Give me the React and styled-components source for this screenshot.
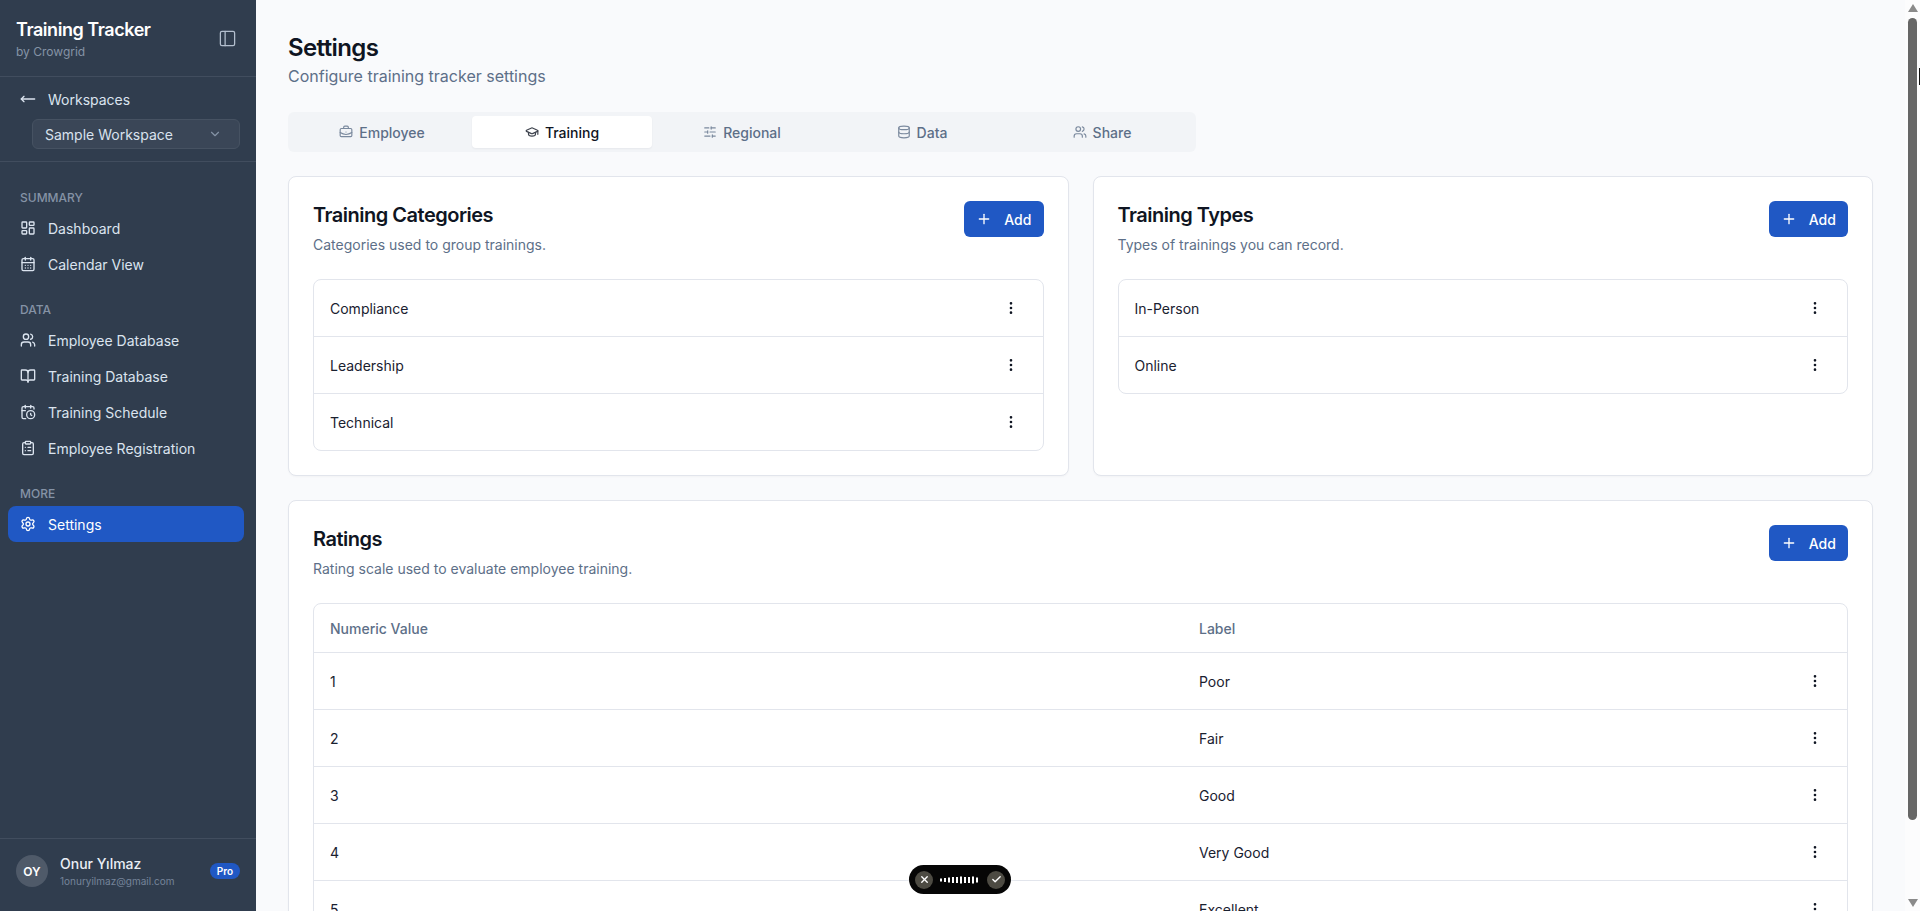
import styled, { createGlobalStyle } from "styled-components";
import {
  BookOpen,
  BriefcaseBusiness,
  CalendarClock,
  CalendarDays,
  Check,
  ChevronDown,
  ClipboardList,
  Database,
  EllipsisVertical,
  GraduationCap,
  LayoutDashboard,
  MoveLeft,
  PanelLeft,
  Plus,
  Settings,
  SlidersHorizontal,
  Users,
  X,
} from "lucide-react";

const GlobalStyle = createGlobalStyle`
  * {
    box-sizing: border-box;
  }

  html,
  body {
    margin: 0;
    height: 100%;
    overflow: hidden;
    font-family: Inter, "Liberation Sans", sans-serif;
    background: #f9fafc;
  }
`;

const Shell = styled.div`
  display: flex;
  height: 911px;
  overflow: hidden;
  position: relative;
`;

const Sidebar = styled.aside`
  width: 256px;
  flex: none;
  display: flex;
  flex-direction: column;
  background: #303d4e;
  color: #e2e8f0;
`;

const Brand = styled.div`
  height: 77px;
  flex: none;
  display: flex;
  align-items: center;
  justify-content: space-between;
  padding: 0 19px 0 16px;
  border-bottom: 1px solid #414d5e;
  color: #b3bfce;
`;

const BrandName = styled.div`
  font-size: 18px;
  line-height: 28px;
  font-weight: 600;
  letter-spacing: -0.45px;
  color: #fff;
`;

const BrandSub = styled.div`
  font-size: 12px;
  line-height: 16px;
  color: #8593a6;
`;

const WorkspaceBlock = styled.div`
  height: 85px;
  flex: none;
  padding: 8px 16px 0 20px;
  border-bottom: 1px solid #414d5e;
`;

const BackRow = styled.div`
  height: 28px;
  display: flex;
  align-items: center;
  gap: 12px;
  font-size: 14px;
  color: #dbe4ef;
`;

const WorkspaceSelect = styled.div`
  height: 30px;
  margin: 6px 0 0 12px;
  display: flex;
  align-items: center;
  justify-content: space-between;
  padding: 0 17px 0 12px;
  font-size: 14px;
  color: #d9e2ee;
  background: #3a4657;
  border: 1px solid #465262;
  border-radius: 6px;

  svg {
    color: #8593a6;
  }
`;

const Nav = styled.nav`
  flex: 1;
  padding: 25px 12px 0 8px;
`;

const NavLabel = styled.div`
  height: 20px;
  margin: 0 0 3px 12px;
  display: flex;
  align-items: center;
  font-size: 12px;
  font-weight: 500;
  color: #8593a6;
`;

const NavGroup = styled.div`
  margin-bottom: 17px;
`;

const NavItem = styled.div`
  height: 36px;
  display: flex;
  align-items: center;
  gap: 12px;
  padding-left: 12px;
  border-radius: 8px;
  font-size: 14px;
  color: ${(props) => (props.$active ? "#fff" : "#dbe4ef")};
  background: ${(props) => (props.$active ? "#2058c4" : "transparent")};
`;

const Footer = styled.div`
  height: 73px;
  flex: none;
  display: flex;
  align-items: center;
  gap: 12px;
  padding: 16px 16px 24px;
  border-top: 1px solid #414d5e;
`;

const Avatar = styled.div`
  width: 32px;
  height: 32px;
  flex: none;
  display: flex;
  align-items: center;
  justify-content: center;
  border-radius: 50%;
  background: #4f5a69;
  color: #fff;
  font-size: 12px;
  font-weight: 600;
`;

const UserInfo = styled.div`
  flex: 1;
  min-width: 0;
`;

const UserName = styled.div`
  font-size: 14px;
  line-height: 20px;
  font-weight: 500;
  color: #e9eef5;
`;

const UserMail = styled.div`
  font-size: 10px;
  line-height: 14px;
  color: #75849a;
`;

const ProBadge = styled.span`
  height: 16px;
  padding: 0 7px;
  display: flex;
  align-items: center;
  border-radius: 999px;
  background: #2058c4;
  color: #fff;
  font-size: 10px;
  font-weight: 600;
`;

const Main = styled.main`
  flex: 1;
  min-width: 0;
  padding: 32px 32px 0;
  overflow: hidden;
`;

const PageTitle = styled.h1`
  margin: 0;
  font-size: 24px;
  line-height: 32px;
  font-weight: 600;
  letter-spacing: -0.6px;
  color: #0f1522;
`;

const PageSub = styled.p`
  margin: 0;
  font-size: 16px;
  line-height: 24px;
  color: #5d6f88;
`;

const TabBar = styled.div`
  width: 908px;
  height: 40px;
  margin: 24px 0;
  padding: 4px;
  display: grid;
  grid-template-columns: repeat(5, 1fr);
  background: #f2f4f7;
  border-radius: 6px;
`;

const Tab = styled.div`
  display: flex;
  align-items: center;
  justify-content: center;
  gap: 6px;
  border-radius: 4px;
  font-size: 14px;
  font-weight: 500;
  color: ${(props) => (props.$active ? "#0f1522" : "#5d6f88")};
  background: ${(props) => (props.$active ? "#fff" : "transparent")};
  box-shadow: ${(props) =>
    props.$active ? "0 1px 2px rgba(15, 21, 34, 0.05)" : "none"};

  svg {
    opacity: 0.8;
  }
`;

const CardRow = styled.div`
  display: grid;
  grid-template-columns: 1fr 1fr;
  gap: 24px;
  margin-bottom: 24px;
`;

const Card = styled.section`
  padding: 24px;
  background: #fff;
  border: 1px solid #e2e5ec;
  border-radius: 8px;
  box-shadow: 0 1px 2px rgba(15, 21, 34, 0.03);
`;

const CardHead = styled.div`
  display: flex;
  justify-content: space-between;
  align-items: flex-start;
  margin-bottom: 24px;
`;

const CardTitle = styled.h2`
  margin: 0 0 6px;
  font-size: 20px;
  line-height: 28px;
  font-weight: 600;
  letter-spacing: -0.5px;
  color: #0f1522;
`;

const CardDesc = styled.p`
  margin: 0;
  font-size: 14px;
  line-height: 20px;
  color: #5d6f88;
`;

const AddButton = styled.button`
  width: 79.5px;
  height: 36px;
  display: flex;
  align-items: center;
  justify-content: center;
  gap: 12px;
  border: 0;
  border-radius: 6px;
  background: #2058c4;
  color: #fff;
  font: 500 14px Inter, sans-serif;
`;

const List = styled.div`
  border: 1px solid #e2e5ec;
  border-radius: 8px;
  overflow: hidden;
`;

const ListRow = styled.div`
  height: 56px;
  display: flex;
  align-items: center;
  justify-content: space-between;
  padding: 0 16px;
  font-size: 14px;
  color: #1a2130;

  & + & {
    height: 57px;
    border-top: 1px solid #e2e5ec;
  }
`;

const MenuDots = styled.span`
  width: 32px;
  height: 32px;
  display: flex;
  align-items: center;
  justify-content: center;
  color: #0f1522;
`;

const TableHead = styled.div`
  height: 48px;
  display: grid;
  grid-template-columns: 869px 1fr;
  align-items: center;
  padding: 0 16px;
  font-size: 14px;
  font-weight: 500;
  color: #5d6f88;
`;

const TableRow = styled.div`
  height: 57px;
  display: grid;
  grid-template-columns: 869px 1fr 32px;
  align-items: center;
  padding: 0 16px;
  border-top: 1px solid #e2e5ec;
  font-size: 14px;
  color: #1a2130;
`;

const Scrollbar = styled.div`
  width: 15px;
  flex: none;
  display: flex;
  flex-direction: column;
  align-items: center;
  padding: 4px 0;
  background: #fcfcfd;
`;

const ArrowUp = styled.div`
  flex: none;
  border-left: 5px solid transparent;
  border-right: 5px solid transparent;
  border-bottom: 8px solid #8a8a8a;
`;

const ArrowDown = styled(ArrowUp)`
  margin-top: auto;
  border-bottom: 0;
  border-top: 8px solid #8a8a8a;
`;

const Thumb = styled.div`
  width: 9px;
  height: 802px;
  margin-top: 6px;
  border-radius: 5px;
  background: #666;
`;

const CursorMark = styled.div`
  position: absolute;
  right: 0;
  top: 68px;
  width: 1px;
  height: 17px;
  background: #111;
`;

const VoicePill = styled.div`
  position: absolute;
  left: 909px;
  top: 865px;
  width: 102px;
  height: 29px;
  display: flex;
  align-items: center;
  justify-content: space-between;
  padding: 0 6px;
  border-radius: 15px;
  background: #060606;
  box-shadow: 0 0 12px rgba(255, 255, 255, 0.7);
`;

const PillButton = styled.span`
  width: 18px;
  height: 18px;
  display: flex;
  align-items: center;
  justify-content: center;
  border-radius: 50%;
  background: #4d4b43;
  color: #fff;
`;

const navGroups = [
  {
    label: "SUMMARY",
    items: [
      { icon: LayoutDashboard, text: "Dashboard" },
      { icon: CalendarDays, text: "Calendar View" },
    ],
  },
  {
    label: "DATA",
    items: [
      { icon: Users, text: "Employee Database" },
      { icon: BookOpen, text: "Training Database" },
      { icon: CalendarClock, text: "Training Schedule" },
      { icon: ClipboardList, text: "Employee Registration" },
    ],
  },
  {
    label: "MORE",
    items: [{ icon: Settings, text: "Settings", active: true }],
  },
];

const tabs = [
  { icon: BriefcaseBusiness, text: "Employee" },
  { icon: GraduationCap, text: "Training", active: true },
  { icon: SlidersHorizontal, text: "Regional" },
  { icon: Database, text: "Data" },
  { icon: Users, text: "Share" },
];

const ratings = [
  ["1", "Poor"],
  ["2", "Fair"],
  ["3", "Good"],
  ["4", "Very Good"],
  ["5", "Excellent"],
];

const waveBars = [3, 4, 5, 6, 6, 7, 6, 6, 7, 5];

const Add = () => (
  <AddButton>
    <Plus size={16} />
    Add
  </AddButton>
);

const Dots = () => (
  <MenuDots>
    <EllipsisVertical size={16} />
  </MenuDots>
);

const SimpleCard = ({ title, desc, rows }) => (
  <Card>
    <CardHead>
      <div>
        <CardTitle>{title}</CardTitle>
        <CardDesc>{desc}</CardDesc>
      </div>
      <Add />
    </CardHead>
    <List>
      {rows.map((row) => (
        <ListRow key={row}>
          {row}
          <Dots />
        </ListRow>
      ))}
    </List>
  </Card>
);

export default function App() {
  return (
    <>
      <GlobalStyle />
      <Shell>
        <Sidebar>
          <Brand>
            <div>
              <BrandName>Training Tracker</BrandName>
              <BrandSub>by Crowgrid</BrandSub>
            </div>
            <PanelLeft size={19} strokeWidth={1.6} />
          </Brand>
          <WorkspaceBlock>
            <BackRow>
              <MoveLeft size={16} />
              Workspaces
            </BackRow>
            <WorkspaceSelect>
              Sample Workspace
              <ChevronDown size={14} />
            </WorkspaceSelect>
          </WorkspaceBlock>
          <Nav>
            {navGroups.map((group) => (
              <NavGroup key={group.label}>
                <NavLabel>{group.label}</NavLabel>
                {group.items.map(({ icon: Icon, text, active }) => (
                  <NavItem key={text} $active={active}>
                    <Icon size={16} />
                    {text}
                  </NavItem>
                ))}
              </NavGroup>
            ))}
          </Nav>
          <Footer>
            <Avatar>OY</Avatar>
            <UserInfo>
              <UserName>Onur Yılmaz</UserName>
              <UserMail>1onuryilmaz@gmail.com</UserMail>
            </UserInfo>
            <ProBadge>Pro</ProBadge>
          </Footer>
        </Sidebar>

        <Main>
          <PageTitle>Settings</PageTitle>
          <PageSub>Configure training tracker settings</PageSub>
          <TabBar>
            {tabs.map(({ icon: Icon, text, active }) => (
              <Tab key={text} $active={active}>
                <Icon size={14} />
                {text}
              </Tab>
            ))}
          </TabBar>
          <CardRow>
            <SimpleCard
              title="Training Categories"
              desc="Categories used to group trainings."
              rows={["Compliance", "Leadership", "Technical"]}
            />
            <SimpleCard
              title="Training Types"
              desc="Types of trainings you can record."
              rows={["In-Person", "Online"]}
            />
          </CardRow>
          <Card>
            <CardHead>
              <div>
                <CardTitle>Ratings</CardTitle>
                <CardDesc>Rating scale used to evaluate employee training.</CardDesc>
              </div>
              <Add />
            </CardHead>
            <List>
              <TableHead>
                <span>Numeric Value</span>
                <span>Label</span>
              </TableHead>
              {ratings.map(([value, label]) => (
                <TableRow key={value}>
                  <span>{value}</span>
                  <span>{label}</span>
                  <Dots />
                </TableRow>
              ))}
            </List>
          </Card>
        </Main>

        <Scrollbar>
          <ArrowUp />
          <Thumb />
          <ArrowDown />
        </Scrollbar>
        <CursorMark />

        <VoicePill>
          <PillButton>
            <X size={11} strokeWidth={3} />
          </PillButton>
          <svg width="40" height="10" viewBox="0 0 40 10">
            {waveBars.map((h, i) => (
              <rect key={i} x={i * 4} y={5 - h / 2} width="2" height={h} fill="#fff" />
            ))}
          </svg>
          <PillButton>
            <Check size={11} strokeWidth={3} />
          </PillButton>
        </VoicePill>
      </Shell>
    </>
  );
}
